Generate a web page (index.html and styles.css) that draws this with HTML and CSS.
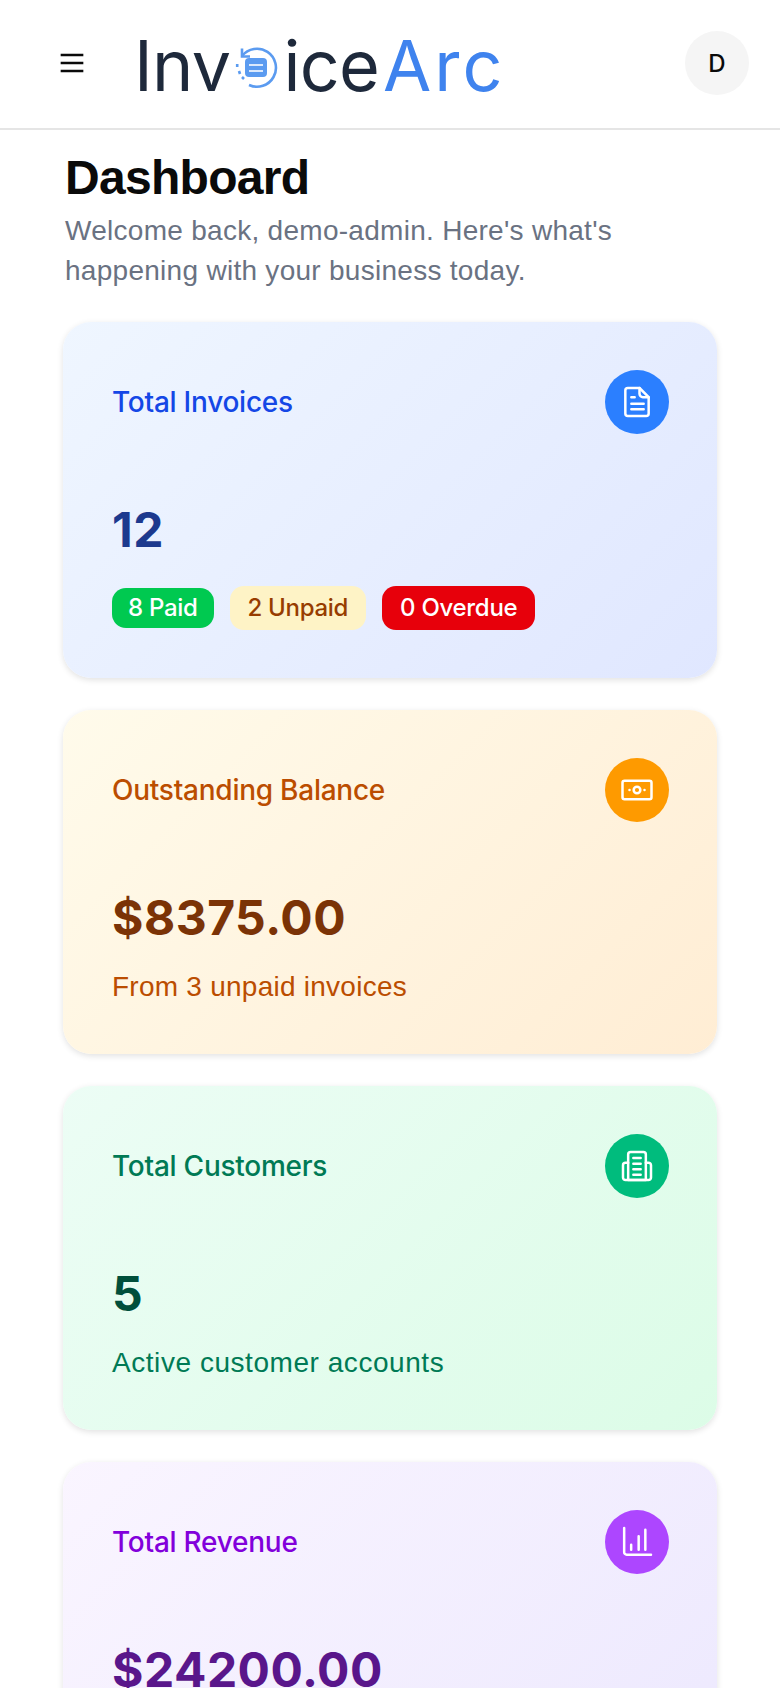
FILE: index.html
```html
<!DOCTYPE html>
<html lang="en">
<head>
    <meta charset="UTF-8">
    <meta name="viewport" content="width=device-width, initial-scale=1.0">
    <title>InvoiceArc Dashboard</title>
    <link rel="stylesheet" href="styles.css">
</head>
<body>

<header class="topbar">
    <button class="menu-btn" aria-label="Menu">
        <svg width="32" height="32" viewBox="0 0 24 24" fill="none" stroke="#0a0a0a" stroke-width="2"><path d="M3.5 6h17M3.5 12h17M3.5 18h17"/></svg>
    </button>
    <div class="logo">
        <span class="logo-dark">Inv</span>
        <svg class="logo-mark" width="44" height="44" viewBox="0 0 44 44" fill="none" stroke="#5b9bf0">
            <!-- ring with the broken lower-left arc and the return arrow -->
            <path d="M8 11A19 19 0 1 1 15 40" stroke-width="2.6"/>
            <path d="M10 34l-2-2M6 29l-1-3M3.200 22v-3" stroke-width="2.6"/>
            <path d="M8 3.500V11.500H16" stroke-width="2.6"/>
            <rect x="11" y="13" width="22" height="19" rx="4" fill="#5b9bf0" stroke="none"/>
            <path d="M15 20h14M15 26h14" stroke="#dbe9fc" stroke-width="2"/>
        </svg>
        <span class="logo-dark">ice</span>
        <span class="logo-blue">Arc</span>
    </div>
    <div class="avatar">D</div>
</header>

<main class="content">
    <h1>Dashboard</h1>
    <p class="lead">Welcome back, demo-admin. Here's what's happening with your business today.</p>

    <section class="card card-blue">
        <div class="card-head">
            <span class="card-title">Total Invoices</span>
            <span class="card-icon">
                <svg class="icon" viewBox="0 0 24 24"><path d="M6.500 3.600h7l5.500 5.500v9.800a1.500 1.500 0 0 1-1.500 1.500h-11a1.500 1.500 0 0 1-1.500-1.500V5.100a1.500 1.500 0 0 1 1.500-1.500z"/><path d="M13.500 3.600v3.500a2 2 0 0 0 2 2H19"/><path d="M8.600 9.200h2M8.600 13h7.400M8.600 16.300h7.400"/></svg>
            </span>
        </div>
        <div class="card-value">12</div>
        <div class="badges">
            <span class="badge badge-paid">8 Paid</span>
            <span class="badge badge-unpaid">2 Unpaid</span>
            <span class="badge badge-overdue">0 Overdue</span>
        </div>
    </section>

    <section class="card card-orange">
        <div class="card-head">
            <span class="card-title">Outstanding Balance</span>
            <span class="card-icon">
                <svg class="icon" viewBox="0 0 24 24"><rect x="3.300" y="6.500" width="17.400" height="11" rx="1.200"/><circle cx="12" cy="12" r="2"/><path d="M7.500 12h.01M16.500 12h.01"/></svg>
            </span>
        </div>
        <div class="card-value">$8375.00</div>
        <p class="card-note">From 3 unpaid invoices</p>
    </section>

    <section class="card card-green">
        <div class="card-head">
            <span class="card-title">Total Customers</span>
            <span class="card-icon">
                <svg class="icon" viewBox="0 0 24 24"><path d="M6.700 20.400V5.100a1.500 1.500 0 0 1 1.500-1.500h7.600a1.500 1.500 0 0 1 1.500 1.500v15.300z"/><path d="M6.700 10H5.100a1.500 1.500 0 0 0-1.500 1.500v7.400a1.500 1.500 0 0 0 1.500 1.500h13.800a1.500 1.500 0 0 0 1.500-1.500v-7.400a1.500 1.500 0 0 0-1.500-1.500h-1.600"/><path d="M9.800 7.200h4.400M9.800 10.600h4.400M9.800 14h4.400M9.800 17.200h4.400"/></svg>
            </span>
        </div>
        <div class="card-value">5</div>
        <p class="card-note">Active customer accounts</p>
    </section>

    <section class="card card-purple">
        <div class="card-head">
            <span class="card-title">Total Revenue</span>
            <span class="card-icon">
                <svg class="icon" viewBox="0 0 24 24"><path d="M4.300 3.600v14.500a1.500 1.500 0 0 0 1.500 1.500h14.600"/><path d="M8.500 13.600v3M13 8.600v8M17 4.600v12"/></svg>
            </span>
        </div>
        <div class="card-value">$24200.00</div>
    </section>
</main>

</body>
</html>
```

FILE: styles.css
```css
* {
    box-sizing: border-box;
}
html, body {
    height: 1688px;
    overflow: hidden;
}
body {
    margin: 0;
    font-family: "Inter", "Liberation Sans", sans-serif;
    background-color: #fff;
    color: #0a0a0a;
}
.topbar {
    display: flex;
    align-items: center;
    height: 130px;
    padding: 0 31px 2px 56px;
    border-bottom: 2px solid #e5e5e5;
}
.menu-btn {
    display: flex;
    padding: 0;
    border: none;
    background: none;
}
.logo {
    display: flex;
    align-items: center;
    margin: 6px 0 0 46px;
    font-size: 70px;
    line-height: 1;
    font-weight: 400;
    filter: blur(0.4px);
}
.logo-dark {
    letter-spacing: -0.7px;
    color: #1e293b;
}
.logo-blue {
    margin-left: 4px;
    letter-spacing: 3px;
    color: #3f83ee;
}
.logo-mark {
    margin: 2px 5px 0 4px;
}
.avatar {
    display: flex;
    align-items: center;
    justify-content: center;
    width: 64px;
    height: 64px;
    margin-left: auto;
    border-radius: 50%;
    background-color: #f5f5f5;
    font-size: 24px;
    font-weight: 500;
}
.content {
    padding: 24px 63px 0;
}
h1, .lead {
    padding-left: 2px;
}
h1 {
    margin: 0;
    font-family: "Liberation Sans", sans-serif;
    font-size: 48px;
    line-height: 48px;
    font-weight: 700;
    letter-spacing: -0.7px;
}
.lead {
    margin: 9px 0 31px;
    font-family: "Liberation Sans", sans-serif;
    font-size: 28px;
    line-height: 40px;
    letter-spacing: 0.28px;
    color: #6a7282;
}
.card {
    padding: 48px 48px 48px 49px;
    margin-top: 32px;
    border-radius: 28px;
    box-shadow: 0 2px 6px rgba(0, 0, 0, 0.12);
}
.lead + .card {
    margin-top: 0;
}
.card-head {
    display: flex;
    justify-content: space-between;
    align-items: center;
}
.card-title {
    font-size: 28px;
    font-weight: 500;
    letter-spacing: -0.25px;
}
.card-icon {
    display: flex;
    align-items: center;
    justify-content: center;
    width: 64px;
    height: 64px;
    border-radius: 50%;
}
.icon {
    width: 40px;
    height: 40px;
    fill: none;
    stroke: #fff;
    stroke-width: 1.5;
    stroke-linejoin: round;
    stroke-linecap: round;
}
.card-value {
    margin-top: 66px;
    font-size: 48px;
    line-height: 60px;
    font-weight: 700;
    letter-spacing: 0.5px;
}
.card-note {
    margin: 19px 0 -1px;
    font-family: "Liberation Sans", sans-serif;
    font-size: 28px;
    line-height: 40px;
    letter-spacing: 0.25px;
}
.badges {
    display: flex;
    align-items: center;
    gap: 16px;
    margin-top: 26px;
}
.badge {
    padding: 0 16px;
    font-size: 24px;
    line-height: 40px;
    font-weight: 500;
    letter-spacing: -0.3px;
    border-radius: 14px;
}
.badge-paid {
    background-color: #00c950;
    color: #fff;
}
.badge-unpaid {
    padding: 2px 18px;
    background-color: #fef3c6;
    color: #973c00;
}
.badge-overdue {
    padding: 2px 18px;
    background-color: #e7000b;
    color: #fff;
}
.card-blue {
    background-image: linear-gradient(135deg, #eff6ff, #e0e7ff);
}
.card-blue .card-title { color: #1447e6; }
.card-blue .card-icon { background-color: #2b7fff; }
.card-blue .card-value { color: #1c398e; }
.card-orange {
    background-image: linear-gradient(135deg, #fffbeb, #ffedd4);
}
.card-orange .card-title, .card-orange .card-note { color: #bb4d00; }
.card-orange .card-icon { background-color: #fe9a00; }
.card-orange .card-value { color: #7b3306; }
.card-green {
    background-image: linear-gradient(135deg, #ecfdf5, #dcfce7);
}
.card-green .card-title, .card-green .card-note { color: #007a55; }
.card-green .card-note { letter-spacing: 0.55px; }
.card-green .card-icon { background-color: #00bc7d; }
.card-green .card-value { color: #004f3b; }
.card-purple {
    background-image: linear-gradient(135deg, #faf5ff, #ede9fe);
}
.card-purple .card-title { color: #8200db; }
.card-purple .card-icon { background-color: #ad46ff; }
.card-purple .card-value { color: #59168b; }
```
